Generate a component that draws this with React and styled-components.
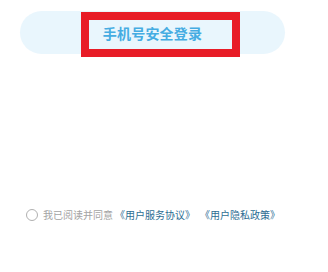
import React from "react";
import styled, { createGlobalStyle } from "styled-components";

const Global = createGlobalStyle`
  html, body { margin: 0; padding: 0; background: #fff; }
  body { font-family: "Noto Sans CJK SC", "Noto Sans", sans-serif; }
`;

const Page = styled.div`
  width: 328px;
  height: 272px;
  position: relative;
  display: flex;
  flex-direction: column;
  box-sizing: border-box;
  padding: 11px 0 0 20px;
`;

const LoginPill = styled.div`
  width: 265px;
  height: 43px;
  border-radius: 22px;
  background: #e9f6fd;
  display: flex;
  align-items: center;
  justify-content: center;
  color: #45ace2;
  font-size: 14px;
  font-weight: 700;
  letter-spacing: 0.2px;
`;

const Highlight = styled.div`
  position: absolute;
  left: 81px;
  top: 12px;
  width: 159px;
  height: 45px;
  box-sizing: border-box;
  border: 8px solid #e81c27;
`;

const Agreement = styled.div`
  margin-top: 154px;
  margin-left: 6px;
  display: flex;
  align-items: center;
  font-size: 10px;
  line-height: 14px;
  color: #a3a3a3;
`;

const Radio = styled.span`
  width: 10px;
  height: 10px;
  border: 1px solid #b0b0b0;
  border-radius: 50%;
  margin-right: 5px;
  flex: none;
`;

const Link = styled.span`
  color: #2c6d93;
  margin-left: ${(p) => p.$gap}px;
`;

export default function App() {
  return (
    <Page>
      <Global />
      <LoginPill>手机号安全登录</LoginPill>
      <Highlight />
      <Agreement>
        <Radio />
        <span>我已阅读并同意</span>
        <Link $gap={2}>《用户服务协议》</Link>
        <Link $gap={5}>《用户隐私政策》</Link>
      </Agreement>
    </Page>
  );
}
